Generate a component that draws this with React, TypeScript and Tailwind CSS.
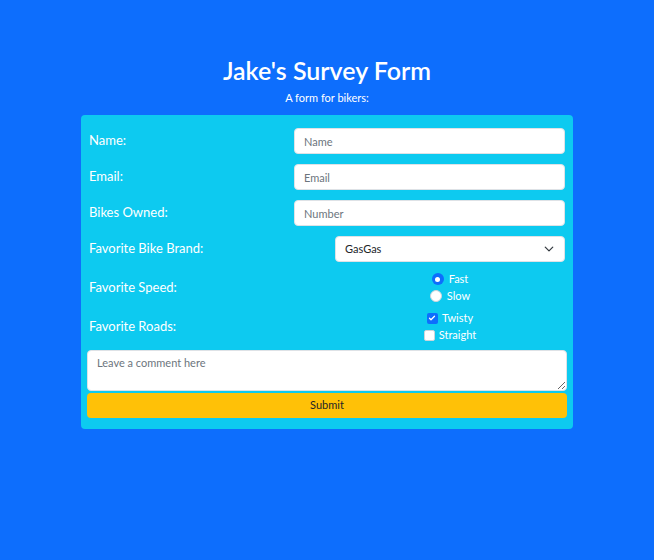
import React from 'react';

function Row({ label, children }: { label: string; children: React.ReactNode }) {
  return (
    <div className="flex items-center justify-between">
      <span className="pl-[2px] text-[13px] text-white">{label}</span>
      {children}
    </div>
  );
}

function Radio({ label, checked }: { label: string; checked?: boolean }) {
  return (
    <label className="flex items-center gap-[5px] text-[11px] leading-[16px] text-white">
      {checked ? (
        <span className="flex h-[12px] w-[12px] items-center justify-center rounded-full bg-[#0d6efd]">
          <span className="h-[5px] w-[5px] rounded-full bg-white" />
        </span>
      ) : (
        <span className="h-[12px] w-[12px] rounded-full border border-[#ced4da] bg-white" />
      )}
      {label}
    </label>
  );
}

function Check({ label, checked }: { label: string; checked?: boolean }) {
  return (
    <label className="flex items-center gap-[4px] text-[11px] leading-[16px] text-white">
      {checked ? (
        <span className="flex h-[11px] w-[11px] items-center justify-center rounded-[2px] bg-[#0d6efd]">
          <svg width="8" height="8" viewBox="0 0 16 16" fill="none">
            <path d="M3 8.5l3 3 7-7" stroke="white" strokeWidth="2.5" strokeLinecap="round" strokeLinejoin="round" />
          </svg>
        </span>
      ) : (
        <span className="h-[11px] w-[11px] rounded-[2px] border border-[#ced4da] bg-white" />
      )}
      {label}
    </label>
  );
}

export default function App() {
  const inputCls =
    'h-[26px] w-[271px] rounded-[4px] border border-[#dee2e6] bg-white px-[9px] text-[11px] text-[#212529] placeholder:text-[#6c757d] outline-none';

  return (
    <div className="min-h-[560px] bg-[#0d6efd] pt-[55px]" style={{ fontFamily: 'Lato, "Noto Sans", sans-serif' }}>
      <h1 className="text-center text-[25px] font-semibold leading-[30px] text-white">Jake's Survey Form</h1>
      <p className="mt-[6px] text-center text-[11px] leading-[14px] text-white">A form for bikers:</p>

      <form className="mx-auto mt-[10px] flex w-[492px] flex-col rounded-[4px] bg-[#0dcaf0] px-[6px] pt-[13px] pb-[11px]">
        <div className="flex flex-col gap-[10px] pr-[2px]">
          <Row label="Name:">
            <input className={inputCls} placeholder="Name" />
          </Row>
          <Row label="Email:">
            <input className={inputCls} placeholder="Email" />
          </Row>
          <Row label="Bikes Owned:">
            <input className={inputCls} placeholder="Number" />
          </Row>
          <Row label="Favorite Bike Brand:">
            <div className="flex h-[26px] w-[230px] items-center justify-between rounded-[4px] border border-[#dee2e6] bg-white pl-[9px] pr-[10px] text-[11px] text-[#212529]">
              <span>GasGas</span>
              <svg width="10" height="10" viewBox="0 0 16 16" fill="none">
                <path d="M2 5l6 6 6-6" stroke="#343a40" strokeWidth="2" strokeLinecap="round" strokeLinejoin="round" />
              </svg>
            </div>
          </Row>
        </div>

        <div className="mt-[9px] flex items-center justify-between pr-[2px]">
          <span className="pl-[2px] text-[13px] text-white">Favorite Speed:</span>
          <div className="flex w-[230px] flex-col items-center gap-[1px]">
            <Radio label="Fast" checked />
            <Radio label="Slow" />
          </div>
        </div>

        <div className="mt-[6px] flex items-center justify-between pr-[2px]">
          <span className="pl-[2px] text-[13px] text-white">Favorite Roads:</span>
          <div className="flex w-[230px] flex-col items-center gap-[1px]">
            <Check label="Twisty" checked />
            <Check label="Straight" />
          </div>
        </div>

        <textarea
          className="mt-[7px] h-[41px] w-full rounded-[4px] border border-[#dee2e6] bg-white px-[9px] py-[5px] text-[11px] leading-[14px] placeholder:text-[#6c757d] outline-none"
          placeholder="Leave a comment here"
        />
        <button
          type="button"
          className="mt-[2px] h-[25px] w-full rounded-[4px] bg-[#ffc107] text-[11px] text-[#212529]"
        >
          Submit
        </button>
      </form>
    </div>
  );
}
